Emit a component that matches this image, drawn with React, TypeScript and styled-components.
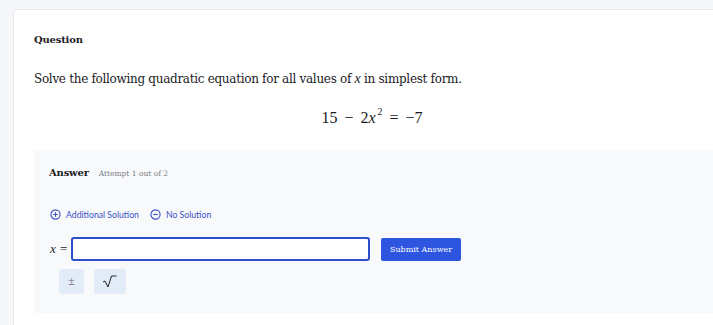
import React from 'react'
import styled, { createGlobalStyle } from 'styled-components'

const GlobalStyle = createGlobalStyle`
  html, body {
    margin: 0;
    padding: 0;
    background: #f6f7f9;
  }
  body {
    font-family: 'DejaVu Serif', serif;
    color: #1b1b1f;
  }
`

const Page = styled.div`
  width: 713px;
  height: 325px;
  overflow: hidden;
  padding: 9px 0 0 13px;
  box-sizing: border-box;
`

const Card = styled.div`
  width: 720px;
  height: 330px;
  background: #fff;
  border: 1px solid #e6e8ec;
  border-radius: 5px 0 0 0;
  padding: 24px 0 0 20px;
  box-sizing: border-box;
`

const Label = styled.div`
  font-family: 'DejaVu Serif', serif;
  font-weight: bold;
  font-size: 10px;
  letter-spacing: -0.2px;
`

const Prompt = styled.p`
  font-family: 'DejaVu Serif', serif;
  font-size: 12px;
  margin: 26px 0 0;
  letter-spacing: -0.3px;
`

const MathVar = styled.i`
  font-family: 'Liberation Serif', serif;
  font-size: 14px;
  font-style: italic;
`

const Equation = styled.div`
  font-family: 'Liberation Serif', serif;
  font-size: 16px;
  line-height: 20px;
  text-align: center;
  margin: 21px 0 0;
  padding-right: 22px;
  word-spacing: 3px;
`

const Sup = styled.sup`
  font-size: 10px;
  line-height: 0;
  vertical-align: 8px;
  margin-left: 2px;
`

const AnswerPanel = styled.div`
  margin-top: 22px;
  background: #f7f9fb;
  padding: 17px 0 19px 15px;
`

const AnswerHead = styled.div`
  display: flex;
  align-items: baseline;
  gap: 10px;
`

const Attempt = styled.span`
  font-family: 'DejaVu Serif', serif;
  font-size: 7.5px;
  color: #7c7f86;
`

const Links = styled.div`
  display: flex;
  gap: 11px;
  margin-top: 31px;
  padding-left: 1px;
`

const LinkButton = styled.button`
  display: flex;
  align-items: center;
  gap: 5px;
  border: 0;
  background: none;
  padding: 0;
  font-family: Lato, 'Noto Sans', sans-serif;
  font-size: 8.7px;
  color: #3d4fc4;
  cursor: pointer;
`

const InputRow = styled.div`
  display: flex;
  align-items: center;
  margin-top: 17px;
`

const VarLabel = styled.span`
  font-family: 'Liberation Serif', serif;
  font-size: 13px;
  width: 22px;
  box-sizing: border-box;
  padding-left: 1px;
  word-spacing: 1px;
`

const AnswerInput = styled.input`
  width: 299px;
  height: 24px;
  box-sizing: border-box;
  border: 2px solid #2f4ec9;
  border-radius: 3px;
  background: #fff;
  outline: none;
  margin: 0;
`

const SubmitButton = styled.button`
  margin-left: 11px;
  width: 80px;
  height: 23px;
  border: 0;
  border-radius: 2px;
  background: #2e55e0;
  color: #fff;
  font-family: 'DejaVu Serif', serif;
  font-size: 8px;
`

const Keys = styled.div`
  display: flex;
  gap: 10px;
  margin: 8px 0 0 10px;
`

const Key = styled.button<{ $wide?: boolean }>`
  width: ${({ $wide }) => ($wide ? '32px' : '25px')};
  height: 25px;
  border: 0;
  border-radius: 3px;
  background: #e2ebf8;
  color: #6b7280;
  font-family: 'Liberation Serif', serif;
  font-size: 12px;
  display: flex;
  align-items: center;
  justify-content: center;
  padding: 0;
`

const PlusCircle = () => (
  <svg width="11" height="11" viewBox="0 0 12 12" fill="none" stroke="#3d4fc4" strokeWidth="1.2">
    <circle cx="6" cy="6" r="5" />
    <path d="M6 3.5v5M3.5 6h5" />
  </svg>
)

const MinusCircle = () => (
  <svg width="11" height="11" viewBox="0 0 12 12" fill="none" stroke="#3d4fc4" strokeWidth="1.2">
    <circle cx="6" cy="6" r="5" />
    <path d="M3.5 6h5" />
  </svg>
)

const SqrtIcon = () => (
  <svg width="16" height="13" viewBox="0 0 16 13" fill="none" stroke="#222" strokeWidth="1">
    <path d="M1 7l2 -1 3 6 3.5 -11h5" />
  </svg>
)

export default function App() {
  return (
    <>
      <GlobalStyle />
      <Page>
        <Card>
          <Label>Question</Label>
          <Prompt>
            Solve the following quadratic equation for all values of <MathVar>x</MathVar> in simplest form.
          </Prompt>
          <Equation>
            15 − 2<i>x</i>
            <Sup>2</Sup> = −7
          </Equation>
          <AnswerPanel>
            <AnswerHead>
              <Label>Answer</Label>
              <Attempt>Attempt 1 out of 2</Attempt>
            </AnswerHead>
            <Links>
              <LinkButton>
                <PlusCircle />
                Additional Solution
              </LinkButton>
              <LinkButton>
                <MinusCircle />
                No Solution
              </LinkButton>
            </Links>
            <InputRow>
              <VarLabel>
                <i>x</i> =
              </VarLabel>
              <AnswerInput />
              <SubmitButton>Submit Answer</SubmitButton>
            </InputRow>
            <Keys>
              <Key>±</Key>
              <Key $wide>
                <SqrtIcon />
              </Key>
            </Keys>
          </AnswerPanel>
        </Card>
      </Page>
    </>
  )
}
